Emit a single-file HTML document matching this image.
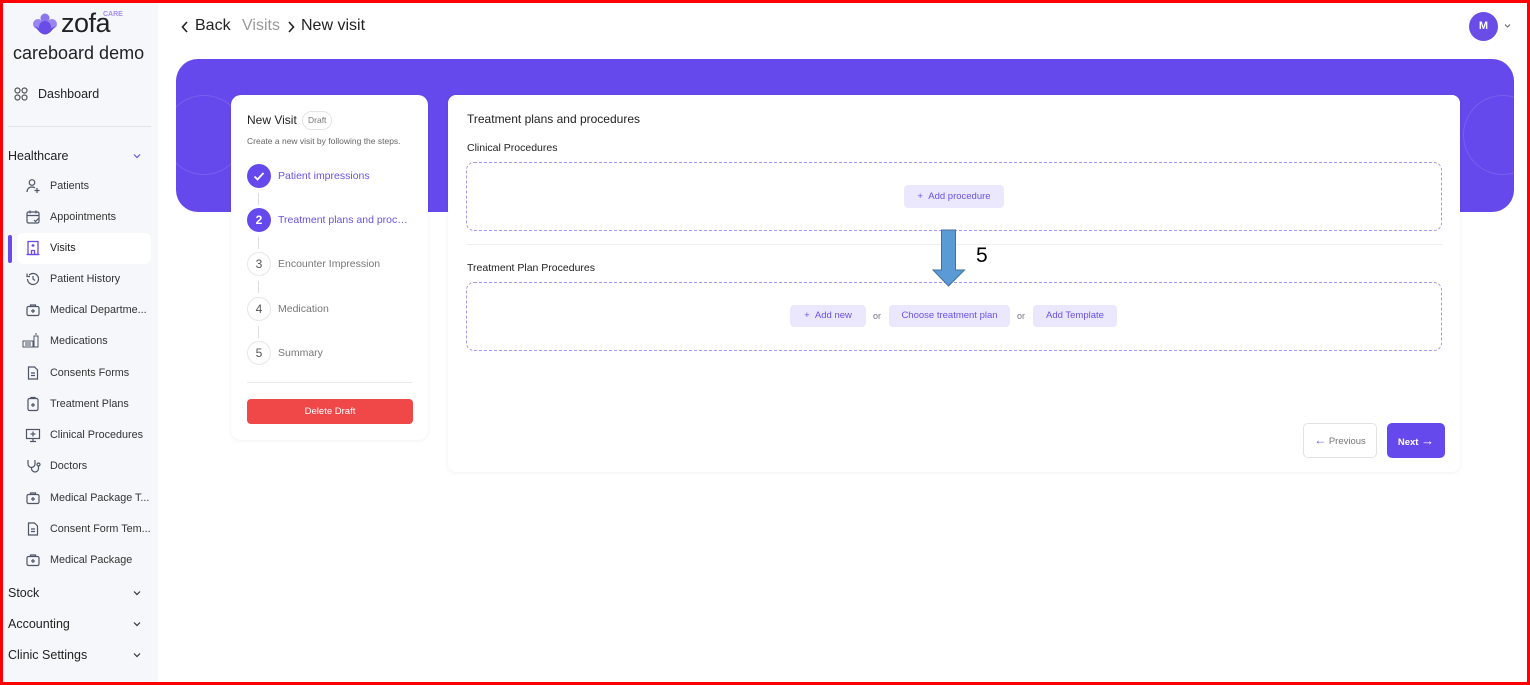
<!DOCTYPE html>
<html><head><meta charset="utf-8"><style>
*{box-sizing:border-box;margin:0;padding:0}
body{width:1530px;height:685px;position:relative;overflow:hidden;font-family:"Liberation Sans",sans-serif;background:#fff;color:#222}
.frame{position:absolute;left:0;top:0;width:1530px;height:685px;border:3px solid #f00;z-index:50;pointer-events:none}
.sb{position:absolute;left:3px;top:3px;width:155px;height:679px;background:#f6f7fa}
.abs{position:absolute}
.nav{position:absolute;left:50px;font-size:10.8px;color:#333}
.ic{position:absolute;left:25px;width:16px;height:16px}
.sec{position:absolute;left:8px;font-size:12.5px;color:#222}
.chev{position:absolute;left:133px;width:8px;height:8px}
.t{position:absolute;white-space:nowrap}
.step{position:absolute;left:247px;width:24px;height:24px;border-radius:50%;font-size:12px;text-align:center;line-height:24px}
.btnl{position:absolute;background:#ebe7fd;color:#6a52e8;font-size:9.5px;border-radius:4px;text-align:center}
</style></head><body>
<div class="sb"></div>
<svg class="abs" style="left:32px;top:13px" width="26" height="24" viewBox="0 0 26 24"><circle cx="13" cy="5" r="4.5" fill="#8b76ee"/><circle cx="6" cy="11" r="5" fill="#9a86f2"/><circle cx="20" cy="11" r="5" fill="#9a86f2"/><path d="M3 13 Q13 30 23 13 Q13 20 3 13Z" fill="#6a4ce6"/><circle cx="13" cy="14" r="6" fill="#6a4ce6"/></svg>
<div class="t" style="left:61px;top:9px;font-size:27px;color:#222;letter-spacing:-0.5px;line-height:28px">zofa</div>
<div class="t" style="left:103px;top:11px;font-size:7px;color:#a48ff5;font-weight:bold">CARE</div>
<div class="t" style="left:13px;top:43px;font-size:18px;color:#222">careboard demo</div>
<svg class="abs" style="left:14px;top:87px" width="14" height="14" viewBox="0 0 14 14" fill="none" stroke="#555" stroke-width="1.2"><circle cx="3.5" cy="3.5" r="2.5"/><circle cx="10.5" cy="3.5" r="2.5"/><circle cx="3.5" cy="10.5" r="2.5"/><circle cx="10.5" cy="10.5" r="2.5"/></svg>
<div class="t" style="left:38px;top:87px;font-size:12.5px;color:#222">Dashboard</div>
<div class="abs" style="left:8px;top:126px;width:143px;height:1px;background:#e2e4ea"></div>
<div class="sec" style="top:149px">Healthcare</div>
<svg class="chev" style="top:152px" viewBox="0 0 8 8"><path d="M1 2.5 4 5.5 7 2.5" fill="none" stroke="#6a52e8" stroke-width="1.2"/></svg>
<div class="abs" style="left:17px;top:233px;width:134px;height:31px;background:#fff;border-radius:6px"></div>
<div class="abs" style="left:8px;top:235px;width:4px;height:28px;background:#6a4ce6;border-radius:2px"></div>
<svg width="0" height="0" style="position:absolute"><defs>
<g id="bag" fill="none" stroke="#4d5566" stroke-width="1.2"><rect x="2" y="4.5" width="12" height="9" rx="1.5"/><path d="M5.5 4.5V3h5v1.5M8 7v4M6 9h4"/></g>
<g id="doc" fill="none" stroke="#4d5566" stroke-width="1.2"><path d="M3.5 2h6l3 3v9h-9z"/><path d="M6 8h4M6 10.5h4"/></g>
</defs></svg>
<svg class="ic" style="top:178px" viewBox="0 0 16 16" fill="none" stroke="#4d5566" stroke-width="1.2"><circle cx="7" cy="4.5" r="2.8"/><path d="M2 14c0-3 2-5 5-5 1.5 0 2.5.5 3 1M12 10v5M9.5 12.5h5"/></svg>
<div class="nav" style="top:180px">Patients</div>
<svg class="ic" style="top:209px" viewBox="0 0 16 16" fill="none" stroke="#4d5566" stroke-width="1.2"><rect x="2" y="3" width="12" height="11" rx="1.5"/><path d="M2 6.5h12M5 1.5v3M11 1.5v3M9 11l1.5 1.5 3-3"/></svg>
<div class="nav" style="top:211px">Appointments</div>
<svg class="ic" style="top:240px" viewBox="0 0 16 16" fill="none" stroke="#6a4ce6" stroke-width="1.3"><rect x="3" y="1.5" width="10" height="13"/><path d="M8 4v3M6.5 5.5h3M6.5 14.5v-4h3v4M1.5 14.5h13"/></svg>
<div class="nav" style="top:242px;color:#222">Visits</div>
<svg class="ic" style="top:271px" viewBox="0 0 16 16" fill="none" stroke="#4d5566" stroke-width="1.2"><path d="M2.5 8a5.5 5.5 0 1 0 1.6-3.9M2 2.5v3h3M8 5v3l2 1.5"/></svg>
<div class="nav" style="top:273px">Patient History</div>
<svg class="ic" style="top:302px" viewBox="0 0 16 16"><use href="#bag"/></svg>
<div class="nav" style="top:304px">Medical Departme...</div>
<svg class="ic" style="top:333px;left:22px;width:20px" viewBox="0 0 20 16" fill="none" stroke="#4d5566" stroke-width="1"><rect x="1" y="8" width="10" height="6"/><path d="M3 10h6M3 12h6M12 3h4v11h-4zM13 1h2"/></svg>
<div class="nav" style="top:335px">Medications</div>
<svg class="ic" style="top:365px" viewBox="0 0 16 16"><use href="#doc"/></svg>
<div class="nav" style="top:367px">Consents Forms</div>
<svg class="ic" style="top:396px" viewBox="0 0 16 16" fill="none" stroke="#4d5566" stroke-width="1.2"><rect x="3" y="2.5" width="10" height="12" rx="1.5"/><path d="M6 2.5V1.5h4v1M8 7v4M6 9h4"/></svg>
<div class="nav" style="top:398px">Treatment Plans</div>
<svg class="ic" style="top:427px" viewBox="0 0 16 16" fill="none" stroke="#4d5566" stroke-width="1.2"><rect x="1.5" y="2.5" width="13" height="9"/><path d="M8 11.5v3M5 14.5h6M8 4.5v5M5.5 7h5"/></svg>
<div class="nav" style="top:429px">Clinical Procedures</div>
<svg class="ic" style="top:458px" viewBox="0 0 16 16" fill="none" stroke="#4d5566" stroke-width="1.2"><path d="M3 2v4a3.5 3.5 0 0 0 7 0V2M6.5 9.5v1a3.5 3.5 0 0 0 7 0V8"/><circle cx="13.5" cy="6.5" r="1.5"/></svg>
<div class="nav" style="top:460px">Doctors</div>
<svg class="ic" style="top:490px" viewBox="0 0 16 16"><use href="#bag"/></svg>
<div class="nav" style="top:492px">Medical Package T...</div>
<svg class="ic" style="top:521px" viewBox="0 0 16 16"><use href="#doc"/></svg>
<div class="nav" style="top:523px">Consent Form Tem...</div>
<svg class="ic" style="top:552px" viewBox="0 0 16 16"><use href="#bag"/></svg>
<div class="nav" style="top:554px">Medical Package</div>
<div class="sec" style="top:586px">Stock</div>
<div class="sec" style="top:617px">Accounting</div>
<div class="sec" style="top:648px">Clinic Settings</div>
<svg class="chev" style="top:589px" viewBox="0 0 8 8"><path d="M1 2.5 4 5.5 7 2.5" fill="none" stroke="#333" stroke-width="1.2"/></svg>
<svg class="chev" style="top:620px" viewBox="0 0 8 8"><path d="M1 2.5 4 5.5 7 2.5" fill="none" stroke="#333" stroke-width="1.2"/></svg>
<svg class="chev" style="top:651px" viewBox="0 0 8 8"><path d="M1 2.5 4 5.5 7 2.5" fill="none" stroke="#333" stroke-width="1.2"/></svg>

<svg class="abs" style="left:181px;top:21px" width="8" height="12" viewBox="0 0 8 12"><path d="M6 1 1.5 6 6 11" fill="none" stroke="#222" stroke-width="1.6"/></svg>
<div class="t" style="left:195px;top:17px;font-size:16px;color:#222">Back</div>
<div class="t" style="left:242px;top:17px;font-size:16px;color:#999">Visits</div>
<svg class="abs" style="left:287px;top:21px" width="8" height="12" viewBox="0 0 8 12"><path d="M2 1 6.5 6 2 11" fill="none" stroke="#222" stroke-width="1.6"/></svg>
<div class="t" style="left:301px;top:17px;font-size:16px;color:#222">New visit</div>
<div class="abs" style="left:1469px;top:12px;width:29px;height:29px;border-radius:50%;background:#6a4ce6;color:#fff;font-size:11px;font-weight:bold;text-align:center;line-height:29px">M</div>
<svg class="abs" style="left:1504px;top:23px" width="7" height="6" viewBox="0 0 7 6"><path d="M1 1.5 3.5 4 6 1.5" fill="none" stroke="#666" stroke-width="1"/></svg>

<div class="abs" style="left:176px;top:59px;width:1338px;height:153px;background:#6549ec;border-radius:22px;overflow:hidden">
<div class="abs" style="left:-12px;top:36px;width:80px;height:80px;border-radius:50%;border:1px solid rgba(255,255,255,.12)"></div>
<div class="abs" style="left:1287px;top:36px;width:80px;height:80px;border-radius:50%;border:1px solid rgba(255,255,255,.12)"></div>
</div>

<div class="abs" style="left:231px;top:95px;width:197px;height:345px;background:#fff;border-radius:10px;box-shadow:0 1px 4px rgba(0,0,0,.06)"></div>
<div class="t" style="left:247px;top:113px;font-size:12px;color:#222">New Visit</div>
<div class="t" style="left:302px;top:111px;height:19px;padding:0 5px;border:1px solid #e4e4e4;border-radius:10px;font-size:8.5px;color:#777;line-height:17px">Draft</div>
<div class="t" style="left:247px;top:136px;font-size:8.5px;color:#666">Create a new visit by following the steps.</div>
<div class="step" style="top:164px;background:#6549ec"><svg width="24" height="24" viewBox="0 0 24 24"><path d="M7.5 12.5l3 3 6-6.5" fill="none" stroke="#fff" stroke-width="1.8"/></svg></div>
<div class="t" style="left:278px;top:170px;font-size:10.5px;color:#6a52e8">Patient impressions</div>
<div class="step" style="top:208px;background:#6549ec;color:#fff;font-weight:bold">2</div>
<div class="t" style="left:278px;top:214px;font-size:10.5px;color:#6a52e8;width:134px;overflow:hidden;text-overflow:ellipsis">Treatment plans and procedures</div>
<div class="step" style="top:252px;border:1px solid #e6e6e6;color:#555;line-height:22px">3</div>
<div class="t" style="left:278px;top:258px;font-size:10.5px;color:#777">Encounter Impression</div>
<div class="step" style="top:297px;border:1px solid #e6e6e6;color:#555;line-height:22px">4</div>
<div class="t" style="left:278px;top:303px;font-size:10.5px;color:#777">Medication</div>
<div class="step" style="top:341px;border:1px solid #e6e6e6;color:#555;line-height:22px">5</div>
<div class="t" style="left:278px;top:347px;font-size:10.5px;color:#777">Summary</div>
<div class="abs" style="left:258px;top:193px;width:1px;height:12px;background:#ddd"></div>
<div class="abs" style="left:258px;top:237px;width:1px;height:12px;background:#ddd"></div>
<div class="abs" style="left:258px;top:281px;width:1px;height:12px;background:#ddd"></div>
<div class="abs" style="left:258px;top:326px;width:1px;height:12px;background:#ddd"></div>
<div class="abs" style="left:247px;top:382px;width:165px;height:1px;background:#ebebeb"></div>
<div class="abs" style="left:247px;top:399px;width:166px;height:25px;background:#f04848;border-radius:4px;color:#fff;font-size:9.5px;text-align:center;line-height:25px">Delete Draft</div>

<div class="abs" style="left:448px;top:95px;width:1012px;height:377px;background:#fff;border-radius:8px;box-shadow:0 1px 4px rgba(0,0,0,.06)"></div>
<div class="t" style="left:467px;top:112px;font-size:12px;color:#222">Treatment plans and procedures</div>
<div class="t" style="left:467px;top:142px;font-size:10.5px;color:#222">Clinical Procedures</div>
<div class="abs" style="left:466px;top:162px;width:976px;height:69px;border:1.3px dashed #a894f5;border-radius:8px"></div>
<div class="btnl" style="left:904px;top:185px;width:100px;height:23px;line-height:23px">+&nbsp;&nbsp;Add procedure</div>
<div class="abs" style="left:466px;top:244px;width:976px;height:1px;background:#efefef"></div>
<div class="t" style="left:467px;top:262px;font-size:10.5px;color:#222">Treatment Plan Procedures</div>
<div class="abs" style="left:466px;top:282px;width:976px;height:69px;border:1.3px dashed #a894f5;border-radius:8px"></div>
<div class="btnl" style="left:790px;top:305px;width:76px;height:22px;line-height:22px">+&nbsp;&nbsp;Add new</div>
<div class="t" style="left:873px;top:311px;font-size:9px;color:#777">or</div>
<div class="btnl" style="left:889px;top:305px;width:121px;height:22px;line-height:22px">Choose treatment plan</div>
<div class="t" style="left:1017px;top:311px;font-size:9px;color:#777">or</div>
<div class="btnl" style="left:1033px;top:305px;width:84px;height:22px;line-height:22px">Add Template</div>
<svg class="abs" style="left:932px;top:229px" width="34" height="58" viewBox="0 0 34 58"><path d="M9.5 1h14v40h9L16.5 57 1 41h8.5z" fill="#5b9bd5" stroke="#41719c" stroke-width="1"/></svg>
<div class="t" style="left:976px;top:244px;font-size:21px;color:#000">5</div>

<div class="abs" style="left:1303px;top:423px;width:74px;height:35px;border:1px solid #e2e2e2;border-radius:5px;font-size:9.5px;color:#777;line-height:33px;text-align:center"><span style="color:#6a52e8;font-size:12px">&#8592;</span> Previous</div>
<div class="abs" style="left:1387px;top:423px;width:58px;height:35px;background:#6549ec;border-radius:5px;font-size:9.5px;color:#fff;line-height:35px;text-align:center;font-weight:bold">Next <span style="font-size:13px">&#8594;</span></div>
<div class="frame"></div>
</body></html>
